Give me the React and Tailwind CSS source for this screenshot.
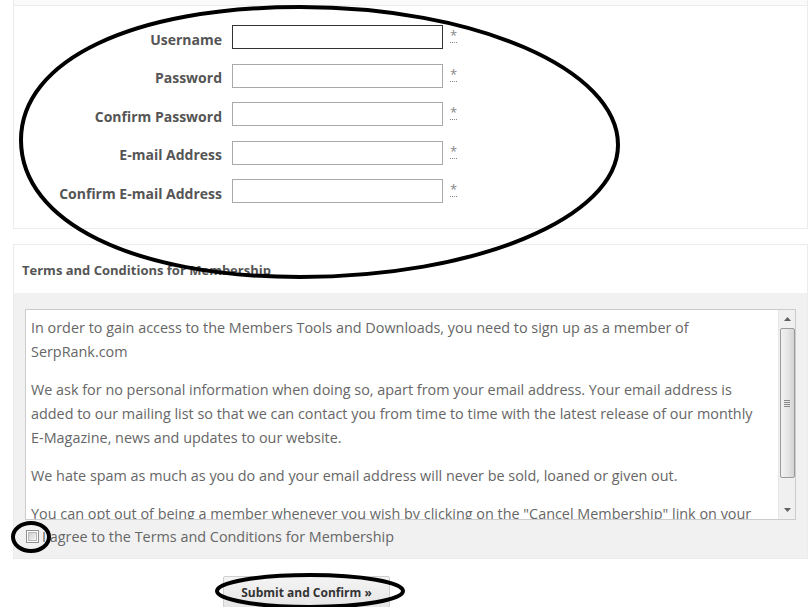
export default function App() {
  const rows = [
    { label: "Username", focus: true },
    { label: "Password" },
    { label: "Confirm Password" },
    { label: "E-mail Address" },
    { label: "Confirm E-mail Address" },
  ];
  const paras = [
    [
      "In order to gain access to the Members Tools and Downloads, you need to sign up as a member of",
      "SerpRank.com",
    ],
    [
      "We ask for no personal information when doing so, apart from your email address. Your email address is",
      "added to our mailing list so that we can contact you from time to time with the latest release of our monthly",
      "E-Magazine, news and updates to our website.",
    ],
    [
      "We hate spam as much as you do and your email address will never be sold, loaned or given out.",
    ],
    [
      'You can opt out of being a member whenever you wish by clicking on the "Cancel Membership" link on your',
      "account page.",
    ],
  ];
  return (
    <div
      className="relative w-[811px] h-[607px] overflow-hidden bg-white text-[#555]"
      style={{ fontFamily: '"Open Sans", "Liberation Sans", sans-serif' }}
    >
      <div className="ml-[13px] w-[795px]">
        <div className="h-[5px] bg-[#fafafa] border-x border-[#ececec]" />
        {/* Form box */}
        <div className="border border-[#ececec] bg-white pt-[19px] pb-[25px] flex flex-col gap-[14.5px]">
          {rows.map((r) => (
            <div key={r.label} className="flex items-center h-[24px]">
              <div className="w-[208px] text-right text-[14px] font-bold text-[#555] leading-none pt-[5px]">
                {r.label}
              </div>
              <div
                className={
                  "ml-[10px] w-[211px] h-[24px] bg-white border " +
                  (r.focus ? "border-[#333]" : "border-[#aaa]")
                }
              />
              <div className="ml-[7px] self-start mt-[3px] flex flex-col items-center">
                <span className="text-[13px] leading-[14px] text-[#888]">*</span>
                <span className="w-[7px] border-b border-dotted border-[#888]" />
              </div>
            </div>
          ))}
        </div>
        {/* Terms box */}
        <div className="mt-[15px] border border-[#ececec]">
          <div className="h-[48px] bg-white pl-[8px] flex items-center pt-[3px]">
            <span className="text-[13px] font-bold text-[#555]">
              Terms and Conditions for Membership
            </span>
          </div>
          <div className="bg-[#f1f1f1] pt-[16px] pl-[11px] pr-[11px] pb-[15px]">
            <div className="h-[211px] border border-[#ccc] bg-white flex">
              <div className="flex-1 overflow-hidden pl-[5px] pt-[5.5px] text-[14.4px] leading-[24px] text-[#666] flex flex-col gap-[14px]">
                {paras.map((p, i) => (
                  <p key={i} className="whitespace-nowrap">
                    {p.map((l, j) => (
                      <span key={j} className="block">
                        {l}
                      </span>
                    ))}
                  </p>
                ))}
              </div>
              {/* scrollbar */}
              <div className="w-[17px] bg-[#f0f0f0] flex flex-col items-center border-l border-[#e8e8e8]">
                <div className="h-[18px] flex items-center justify-center">
                  <svg width="7" height="4" viewBox="0 0 7 4">
                    <path d="M0 4 L3.5 0 L7 4 Z" fill="#606060" />
                  </svg>
                </div>
                <div className="w-[15px] h-[150px] rounded-[2px] border border-[#9a9a9a] bg-gradient-to-r from-[#f2f2f2] via-[#e6e6e6] to-[#d4d4d4] flex items-center justify-center">
                  <div className="flex flex-col gap-[1px]">
                    <div className="w-[6px] h-[1px] bg-[#888]" />
                    <div className="w-[6px] h-[1px] bg-[#888]" />
                    <div className="w-[6px] h-[1px] bg-[#888]" />
                    <div className="w-[6px] h-[1px] bg-[#888]" />
                  </div>
                </div>
                <div className="flex-1" />
                <div className="h-[18px] flex items-center justify-center">
                  <svg width="7" height="4" viewBox="0 0 7 4">
                    <path d="M0 0 L3.5 4 L7 0 Z" fill="#606060" />
                  </svg>
                </div>
              </div>
            </div>
            <div className="flex items-center mt-[9px] h-[14px]">
              <div className="w-[13px] h-[13px] border border-[#8e8f8f] bg-white p-[1px] ml-[1px]">
                <div className="w-full h-full bg-gradient-to-br from-[#cfcfcf] to-[#f4f4f4] border border-[#b8b8b8]" />
              </div>
              <span className="ml-[3px] text-[14.4px] text-[#666] leading-none pt-[3px]">
                I agree to the Terms and Conditions for Membership
              </span>
            </div>
          </div>
        </div>
        {/* Button */}
        <div className="mt-[17px] ml-[210px]">
          <button className="w-[167px] h-[32px] bg-gradient-to-b from-[#f4f4f4] to-[#e6e6e6] border border-[#cfcfcf] rounded-[2px] text-[12px] font-bold text-[#333] pt-[1px]">
            Submit and Confirm »
          </button>
        </div>
      </div>

      {/* Annotation overlay */}
      <svg
        className="absolute left-0 top-0 pointer-events-none"
        width="811"
        height="607"
        viewBox="0 0 811 607"
      >
        <path
          d="M21 140 C21 60 133 7 300 7 C475 7 618 69 618 145 C618 218 475 277 300 277 C133 277 21 222 21 140 Z"
          fill="none"
          stroke="#000"
          strokeWidth="4"
        />
        <ellipse cx="31" cy="537" rx="18" ry="14" fill="none" stroke="#000" strokeWidth="4" />
        <ellipse cx="310" cy="591" rx="93" ry="16" fill="none" stroke="#000" strokeWidth="4" />
      </svg>
    </div>
  );
}
